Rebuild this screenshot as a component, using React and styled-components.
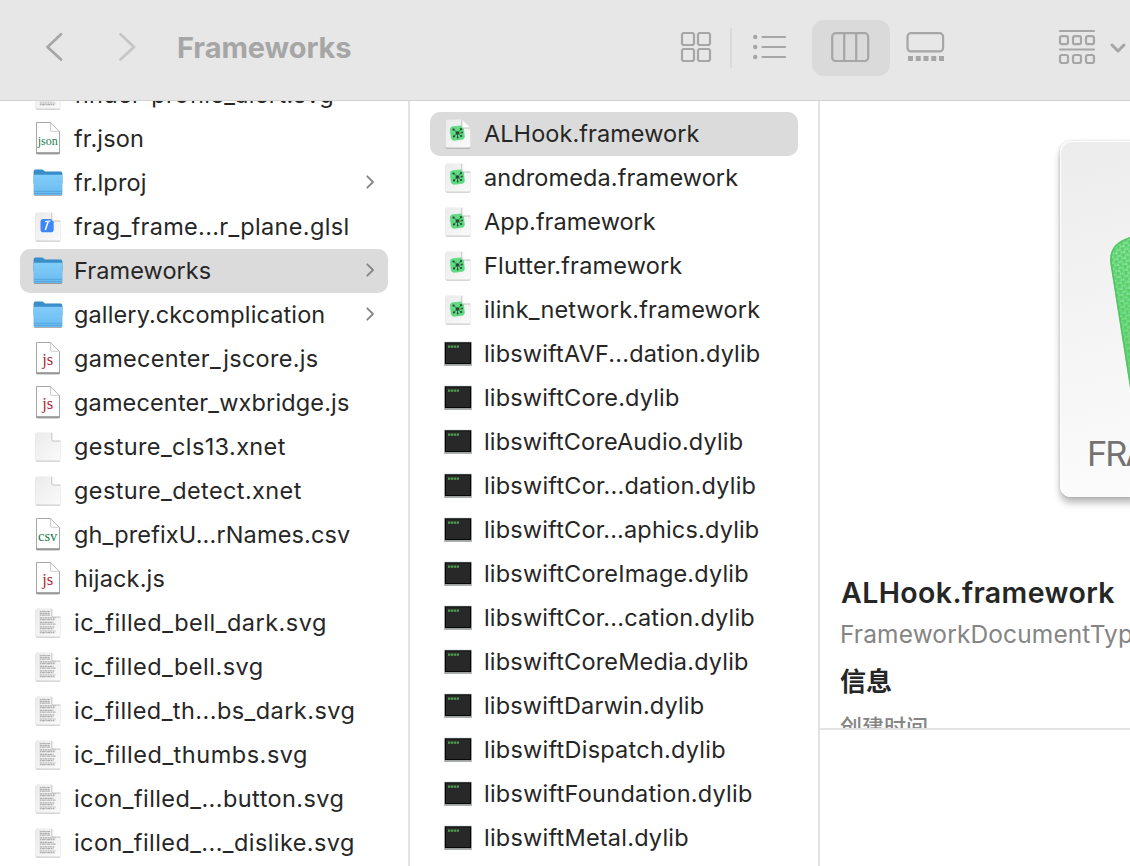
import React from 'react';
import styled, { createGlobalStyle, css } from 'styled-components';

const Global = createGlobalStyle`
  * { box-sizing: border-box; }
  body { margin: 0; background: #fff; overflow: hidden; }
`;

const Window = styled.div`
  width: 1130px;
  height: 866px;
  display: flex;
  flex-direction: column;
  overflow: hidden;
  background: #fff;
  color: #262626;
  font-family: Inter, 'Noto Sans CJK SC', sans-serif;
`;

const Toolbar = styled.header`
  flex: none;
  height: 101px;
  padding-top: 20px;
  display: flex;
  align-items: flex-start;
  background: #e7e7e7;
  border-bottom: 1px solid #d3d3d3;
  color: #a6a6a6;
`;

const Tool = styled.div`
  flex: none;
  width: ${(p) => p.$w}px;
  height: ${(p) => p.$h || 56}px;
  margin-left: ${(p) => p.$gap || 0}px;
  display: flex;
  align-items: center;
  justify-content: center;
  border-radius: 12px;
  background: ${(p) => (p.$active ? '#dadada' : 'transparent')};
  svg { display: block; fill: none; stroke: currentColor; stroke-width: ${(p) => p.$stroke || 2.2}; overflow: visible; }
`;

const Title = styled.h1`
  flex: none;
  width: 485px;
  margin: 0 0 0 40px;
  font-size: 29px;
  line-height: 55px;
  font-weight: 700;
  letter-spacing: -0.1px;
  white-space: nowrap;
`;

const Separator = styled.i`
  flex: none;
  width: 2px;
  height: 40px;
  margin: 8px 0 0 4px;
  background: #d9d9d9;
`;

const Columns = styled.main`
  flex: 1;
  min-height: 0;
  display: flex;
`;

const Column = styled.section`
  flex: none;
  width: 410px;
  height: 100%;
  overflow: hidden;
  display: flex;
  flex-direction: column;
  padding: 0 20px;
  border-right: 2px solid #e2e2e2;
`;

const List = styled.div`
  display: flex;
  flex-direction: column;
  margin-top: ${(p) => p.$offset}px;
`;

const Row = styled.div`
  flex: none;
  height: 44px;
  display: flex;
  align-items: center;
  gap: 10px;
  padding: 0 12px;
  border-radius: 10px;
  ${(p) => p.$selected && css`background: #dbdbdb;`}
`;

const FileIcon = styled.svg`
  flex: none;
  width: 32px;
  height: 32px;
  overflow: visible;
`;

const Name = styled.span`
  flex: 1;
  font-size: 23.5px;
  line-height: 44px;
  letter-spacing: ${(p) => p.$track || 0}px;
  white-space: nowrap;
`;

const Arrow = styled.svg`
  flex: none;
  width: 10px;
  height: 14px;
  margin: 0 1px 2px 0;
  fill: none;
  stroke: #858585;
  stroke-width: 1.8;
  stroke-linecap: round;
  stroke-linejoin: round;
`;

const Preview = styled.aside`
  flex: 1;
  min-width: 0;
  display: flex;
  flex-direction: column;
  overflow: hidden;
`;

const Details = styled.div`
  flex: none;
  height: 629px;
  padding: 40px 0 0 20px;
  overflow: hidden;
  border-bottom: 2px solid #e2e2e2;
  white-space: nowrap;
`;

const Card = styled.div`
  width: 356px;
  height: 356px;
  margin-left: 220px;
  border-radius: 11px;
  background: linear-gradient(165deg, #ececec, #fdfdfd 90%);
  box-shadow: inset 1px 1px 1px #fff, 0 0 3px rgba(0, 0, 0, 0.18), 0 6px 7px rgba(0, 0, 0, 0.27);
  svg { display: block; }
`;

const CardLabel = styled.div`
  margin: -20px 0 0 27px;
  font-size: 34.5px;
  line-height: 44px;
  letter-spacing: -2.2px;
  color: #737373;
`;

const DocName = styled.h2`
  margin: 78px 0 0 1px;
  font-size: 28.5px;
  line-height: 36px;
  font-weight: 600;
  letter-spacing: 0.4px;
`;

const Kind = styled.p`
  margin: 8px 0 0;
  font-size: 24.5px;
  line-height: 30px;
  letter-spacing: 0.12px;
  color: #858585;
`;

const Section = styled.h3`
  margin: 15px 0 0;
  font-size: 26px;
  line-height: 36px;
  font-weight: 700;
`;

const Field = styled.p`
  margin: 11px 0 0;
  font-size: 22px;
  line-height: 32px;
  font-weight: 500;
  color: #858585;
`;

const Defs = () => (
  <svg width="0" height="0" style={{ position: 'absolute' }}>
    <defs>
      <linearGradient id="folderFront" x1="0" y1="0" x2="0" y2="1">
        <stop offset="0" stopColor="#82cdfa" />
        <stop offset="1" stopColor="#6bbaf0" />
      </linearGradient>
      <linearGradient id="page" x1="0" y1="0" x2="1" y2="1">
        <stop offset="0" stopColor="#ebebeb" />
        <stop offset="1" stopColor="#fafafa" />
      </linearGradient>
      <filter id="drop" x="-20%" y="-20%" width="140%" height="150%">
        <feDropShadow dx="0" dy="0.8" stdDeviation="0.7" floodOpacity="0.4" />
      </filter>
    </defs>
  </svg>
);

const Folder = () => (
  <FileIcon viewBox="0 0 32 32">
    <g filter="url(#drop)">
      <path d="M1.700 4.200q0-1.800 1.800-1.800h6.300q1 0 1.800.9l1.300 1.200h15.600q1.800 0 1.800 1.800V16H1.700z" fill="#3b8dc9" />
      <path d="M1.700 9q0-1.300 1.300-1.300h26q1.300 0 1.300 1.300v17.500q0 1.500-1.500 1.500H3.200q-1.500 0-1.500-1.500z" fill="url(#folderFront)" />
    </g>
    <path d="M2 24.300h28M2 26.500h28" stroke="#4d9fd8" strokeWidth=".8" />
  </FileIcon>
);

const Page = ({ children }) => (
  <FileIcon viewBox="0 0 32 32">
    <path d="M5 1.500h14.800L28.500 10v18q0 1.500-1.500 1.500H5Q3.500 29.500 3.500 28V3Q3.500 1.500 5 1.500z" fill="url(#page)" filter="url(#drop)" />
    {children}
    <path d="M19.800 1.500V8.500q0 1.500 1.500 1.500h7.200z" fill="#fdfdfd" />
    <path d="M19.800 1.800V8.500q0 1.500 1.500 1.500h7" fill="none" stroke="#b5b5b5" strokeWidth=".8" />
  </FileIcon>
);

const textLines = [4.5, 6.3, 8.1, 10.8, 12.6, 15.3, 17.1, 19.8, 21.6, 24, 25.6];

const TextDoc = () => (
  <Page>
    {textLines.map((y, i) => (
      <path key={y} d={`M7.800 ${y}H${i < 3 ? 18 : 23.5 - (i % 3)}`} stroke="#adadad" strokeWidth="1.2" strokeDasharray={i % 2 ? '2.6 .5 1.5 .4' : '1.4 .5 3.1 .5'} />
    ))}
  </Page>
);

const Shader = () => (
  <Page>
    <rect x="8.500" y="8" width="13.200" height="13.200" rx="2.800" fill="#3e86f5" />
    <path d="M13.200 11q2-1.500 5.200-.8" stroke="#fff" strokeWidth="1.200" fill="none" />
    <path d="M16.300 10.300L13.300 19" stroke="#fff" strokeWidth="1.500" fill="none" />
  </Page>
);

const Framework = () => (
  <Page>
    <rect x="8.700" y="8.300" width="13.200" height="13.600" rx="2.800" fill="#5fdc83" stroke="#58d47c" strokeWidth=".6" transform="rotate(-7 15.400 15)" />
    <path d="M15.500 15L11.500 11M15.500 15L19 11.300M15.500 15L11.500 18.700M15.500 15L19 18.200M15.500 15V19M15.500 15H19" stroke="#356b49" strokeWidth=".9" />
    <g fill="#2b4335">
      <circle cx="15.300" cy="15" r="1.800" />
      <circle cx="11.500" cy="11.600" r="1.100" /><circle cx="19" cy="11.200" r="1.100" />
      <circle cx="12" cy="18.400" r="1.100" /><circle cx="19.100" cy="18" r="1.100" />
      <circle cx="15.700" cy="19.500" r=".9" /><circle cx="20" cy="14.500" r=".9" />
    </g>
  </Page>
);

const Dylib = () => (
  <FileIcon viewBox="0 0 32 32">
    <rect x="2" y="3.700" width="28" height="23.300" rx=".6" fill="#c3cdd0" filter="url(#drop)" />
    <rect x="2.800" y="4.300" width="26.400" height="21.900" fill="#050505" />
    <rect x="4" y="5.300" width="24" height="19.800" fill="#282828" />
    <path d="M6 8.700H17" stroke="#4d9d50" strokeWidth="2.200" strokeDasharray="2.300 .6" />
  </FileIcon>
);

const CodeDoc = ({ label, color, size }) => (
  <FileIcon viewBox="0 0 32 32">
    <path d="M4.500-.5H18.500L27.500 8.500V30H4.500z" fill="#fff" stroke="#a6a6a6" strokeWidth="1" strokeLinejoin="round" filter="url(#drop)" />
    <path d="M18.500-.2V7q0 1.300 1.300 1.300h7.400z" fill="#fff" stroke="#c2c2c2" strokeWidth=".8" />
    <path d="M4.500 30h23" stroke="#7c7c7c" strokeWidth="1" />
    <text x="15.700" y="21.500" textAnchor="middle" fontFamily="'Liberation Serif', serif" fontSize={size} fill={color}>{label}</text>
  </FileIcon>
);

const icons = {
  folder: <Folder />,
  text: <TextDoc />,
  blank: <Page />,
  shader: <Shader />,
  framework: <Framework />,
  dylib: <Dylib />,
  json: <CodeDoc label="json" color="#1b7b4b" size="12" />,
  csv: <CodeDoc label="csv" color="#1b7b4b" size="14.5" />,
  js: <CodeDoc label="js" color="#ad1f33" size="16.5" />,
};

const resources = [
  ['text', 'finder-profile_alert.svg', 0.32],
  ['json', 'fr.json', 0.15],
  ['folder', 'fr.lproj', 0.2],
  ['shader', 'frag_frame...r_plane.glsl', 0.32],
  ['folder', 'Frameworks', 0.08, true],
  ['folder', 'gallery.ckcomplication', 0.12],
  ['js', 'gamecenter_jscore.js', 0.3],
  ['js', 'gamecenter_wxbridge.js', 0.14],
  ['blank', 'gesture_cls13.xnet', 0.38],
  ['blank', 'gesture_detect.xnet', 0.4],
  ['csv', 'gh_prefixU...rNames.csv', 0.14],
  ['js', 'hijack.js', 0.14],
  ['text', 'ic_filled_bell_dark.svg', 0.5],
  ['text', 'ic_filled_bell.svg', 0.48],
  ['text', 'ic_filled_th...bs_dark.svg', 0.44],
  ['text', 'ic_filled_thumbs.svg', 0.52],
  ['text', 'icon_filled_...button.svg', 0.42],
  ['text', 'icon_filled_..._dislike.svg', 0.41],
];

const frameworks = [
  ['framework', 'ALHook.framework', 0.06, true],
  ['framework', 'andromeda.framework', 0.1],
  ['framework', 'App.framework', 0.03],
  ['framework', 'Flutter.framework', 0.17],
  ['framework', 'ilink_network.framework', 0.17],
  ['dylib', 'libswiftAVF...dation.dylib', 0.16],
  ['dylib', 'libswiftCore.dylib', 0.17],
  ['dylib', 'libswiftCoreAudio.dylib', 0.14],
  ['dylib', 'libswiftCor...dation.dylib', 0.2],
  ['dylib', 'libswiftCor...aphics.dylib', 0.17],
  ['dylib', 'libswiftCoreImage.dylib', 0.18],
  ['dylib', 'libswiftCor...cation.dylib', 0.18],
  ['dylib', 'libswiftCoreMedia.dylib', 0.17],
  ['dylib', 'libswiftDarwin.dylib', 0.16],
  ['dylib', 'libswiftDispatch.dylib', 0.23],
  ['dylib', 'libswiftFoundation.dylib', 0.24],
  ['dylib', 'libswiftMetal.dylib', 0.22],
];

const FileList = ({ items, offset }) => (
  <List $offset={offset}>
    {items.map(([kind, name, track, selected]) => (
      <Row key={name} $selected={selected}>
        {icons[kind]}
        <Name $track={track}>{name}</Name>
        {kind === 'folder' && (
          <Arrow viewBox="0 0 10 14"><path d="M2.300 1.300L8 7l-5.700 5.700" /></Arrow>
        )}
      </Row>
    ))}
  </List>
);

const body = 'M51 121Q49 100 78 95L250 76Q278 74 281 98L303 260Q305 283 282 286L104 305Q80 307 77 286z';

const CardArt = () => (
  <svg width="356" height="311" viewBox="0 0 356 311">
    <defs>
      <pattern id="weave" width="8" height="6" patternUnits="userSpaceOnUse" patternTransform="rotate(-8)">
        <rect width="8" height="6" fill="#55ce68" />
        <path d="M.5 1.200h5M.5 2.700h5M4.500 4.200h3.500M0 4.200h1.500M4.500 5.700h3.500M0 5.700h1.500" stroke="#a8efb9" strokeWidth="1" strokeDasharray="1.800 .5" />
      </pattern>
      <linearGradient id="weaveFade" x1="0" y1="0" x2="0" y2="1">
        <stop offset="0" stopColor="#58d067" stopOpacity="0" />
        <stop offset="1" stopColor="#4fca5e" stopOpacity=".7" />
      </linearGradient>
    </defs>
    <g filter="url(#drop)">
      <path d={body} fill="url(#weave)" stroke="#4cc75c" strokeWidth="1.500" />
      <path d={body} fill="url(#weaveFade)" />
    </g>
    <circle cx="82" cy="132" r="12" fill="#2c4635" />
  </svg>
);

export default function App() {
  return (
    <Window>
      <Global />
      <Defs />
      <Toolbar>
        <Tool $w={20} $h={54} $gap={44} $stroke={2.7}>
          <svg width="20" height="30" strokeLinecap="round" strokeLinejoin="round"><path d="M17 2.300L3.500 15 17 27.500" /></svg>
        </Tool>
        <Tool $w={20} $h={54} $gap={53} $stroke={2.7}>
          <svg width="20" height="30" strokeLinecap="round" strokeLinejoin="round" opacity=".5"><path d="M3.500 2.300L17 15 3.500 27.500" /></svg>
        </Tool>
        <Title>Frameworks</Title>
        <Tool $w={60} $gap={4}>
          <svg width="30" height="32">
            {[[1, 2], [17, 2], [1, 18], [17, 18]].map(([x, y]) => (
              <rect key={`${x}-${y}`} x={x} y={y - 1} width="12" height="12" rx="2" />
            ))}
          </svg>
        </Tool>
        <Separator />
        <Tool $w={60} $gap={8}>
          <svg width="34" height="30">
            {[4, 14, 24].map((y) => (
              <g key={y}>
                <circle cx="2.200" cy={y} r="2.200" fill="currentColor" stroke="none" />
                <path d={`M9.500 ${y}H32`} strokeLinecap="round" />
              </g>
            ))}
          </svg>
        </Tool>
        <Tool $w={78} $gap={12} $active>
          <svg width="38" height="32"><rect x="0.200" y="1.200" width="36" height="27.800" rx="3.500" /><path d="M12.200 1v28M24.200 1v28" /></svg>
        </Tool>
        <Tool $w={72}>
          <svg width="38" height="32">
            <rect x="1.200" y="1.200" width="35.600" height="18.200" rx="3.500" transform="translate(-.7 0)" />
            <path d="M1 26.500H37.500" style={{ strokeWidth: 5 }} strokeDasharray="5 2.750" />
          </svg>
        </Tool>
        <Tool $w={38} $gap={96}>
          <svg width="38" height="36">
            <path d="M2 1H36M2 19.500H36" strokeLinecap="round" />
            {[2, 15, 28].map((x) => [6.2, 25].map((y) => (
              <rect key={`${x}-${y}`} x={x} y={y} width="8" height="8" rx="2" />
            )))}
          </svg>
        </Tool>
        <Tool $w={16} $gap={14} $stroke={3}>
          <svg width="16" height="12" strokeLinecap="round" strokeLinejoin="round"><path d="M2 3l6 6 6-6" /></svg>
        </Tool>
      </Toolbar>
      <Columns>
        <Column><FileList items={resources} offset={-28} /></Column>
        <Column><FileList items={frameworks} offset={11} /></Column>
        <Preview>
          <Details>
            <Card>
              <CardArt />
              <CardLabel>FRAMEWORK</CardLabel>
            </Card>
            <DocName>ALHook.framework</DocName>
            <Kind>FrameworkDocumentType</Kind>
            <Section>信息</Section>
            <Field>创建时间</Field>
          </Details>
        </Preview>
      </Columns>
    </Window>
  );
}
